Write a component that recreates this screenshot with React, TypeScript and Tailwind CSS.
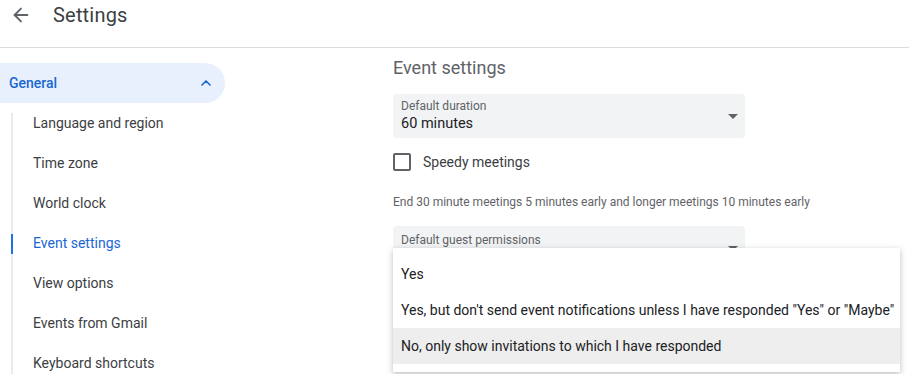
import { ArrowLeft, ChevronUp } from 'lucide-react'

const navItems = [
  'Language and region',
  'Time zone',
  'World clock',
  'Event settings',
  'View options',
  'Events from Gmail',
  'Keyboard shortcuts',
]

const options = [
  'Yes',
  'Yes, but don\'t send event notifications unless I have responded "Yes" or "Maybe"',
  'No, only show invitations to which I have responded',
]

function DropArrow() {
  return (
    <svg width="10" height="5" viewBox="0 0 10 5" className="fill-[#5f6368]">
      <path d="M0 0 L5 5 L10 0 Z" />
    </svg>
  )
}

export default function App() {
  return (
    <div className="h-[374px] w-[909px] overflow-hidden bg-white font-['Roboto',sans-serif] text-[#3c4043]">
      <header className="flex h-[48px] items-start border-b border-[#dadce0]">
        <button className="ml-[9px] mt-[3px] flex h-6 w-6 items-center justify-center text-[#5f6368]">
          <ArrowLeft size={22} strokeWidth={2} />
        </button>
        <h1 className="ml-[20px] text-[20px] leading-[30px] tracking-[0.2px] text-[#3c4043]">Settings</h1>
      </header>

      <div className="flex">
        <aside className="w-[240px] shrink-0">
          <div className="mt-[15px] flex h-10 w-[225px] items-center justify-between rounded-r-full bg-[#e8f0fe] pl-[9px] pr-[11px] text-[14px] font-medium text-[#1967d2]">
            <span>General</span>
            <ChevronUp size={16} strokeWidth={2.5} />
          </div>
          <ul className="relative ml-[11px] before:absolute before:left-0 before:top-[10px] before:bottom-0 before:w-[2px] before:bg-[#e8eaed]">
            {navItems.map((item) => {
              const active = item === 'Event settings'
              return (
                <li
                  key={item}
                  className={
                    'relative flex h-10 items-center pl-[22px] text-[14px] ' +
                    (active ? 'text-[#1967d2]' : 'text-[#3c4043]')
                  }
                >
                  {active && (
                    <span className="absolute left-0 top-[11px] h-5 w-[2px] bg-[#1a73e8]" />
                  )}
                  {item}
                </li>
              )
            })}
          </ul>
        </aside>

        <main className="ml-[153px] pt-[8px]">
          <h2 className="text-[18px] leading-6 text-[#5f6368]">Event settings</h2>

          <div className="mt-[14px] flex h-[44px] w-[352px] items-center justify-between rounded bg-[#f1f3f4] pl-[8px] pr-[7px]">
            <div className="flex flex-col">
              <span className="text-[12px] leading-4 text-[#5f6368]">Default duration</span>
              <span className="text-[14.5px] leading-5 text-[#202124]">60 minutes</span>
            </div>
            <DropArrow />
          </div>

          <label className="mt-[12px] flex h-6 items-center">
            <span className="h-[18px] w-[18px] rounded-[2px] border-2 border-[#5f6368]" />
            <span className="ml-[12px] text-[14px] text-[#3c4043]">Speedy meetings</span>
          </label>

          <p className="mt-[20px] text-[12px] leading-4 text-[#5f6368]">
            End 30 minute meetings 5 minutes early and longer meetings 10 minutes early
          </p>

          <div className="relative mt-[16px]">
            <div className="flex h-[44px] w-[352px] justify-between rounded bg-[#f1f3f4] pl-[8px] pr-[7px] pt-[6px]">
              <span className="text-[12px] leading-4 text-[#5f6368]">Default guest permissions</span>
              <div className="pt-[14px]">
                <DropArrow />
              </div>
            </div>
            <div className="absolute left-0 top-[22px] w-[507px] bg-white py-2 shadow-[0_2px_6px_rgba(60,64,67,0.35)]">
              {options.map((opt, i) => (
                <div
                  key={opt}
                  className={
                    'flex h-9 items-center whitespace-nowrap px-[8px] text-[14px] text-[#202124] ' +
                    (i === 2 ? 'bg-[#eeeeee]' : '')
                  }
                >
                  {opt}
                </div>
              ))}
            </div>
          </div>
        </main>
      </div>
    </div>
  )
}
